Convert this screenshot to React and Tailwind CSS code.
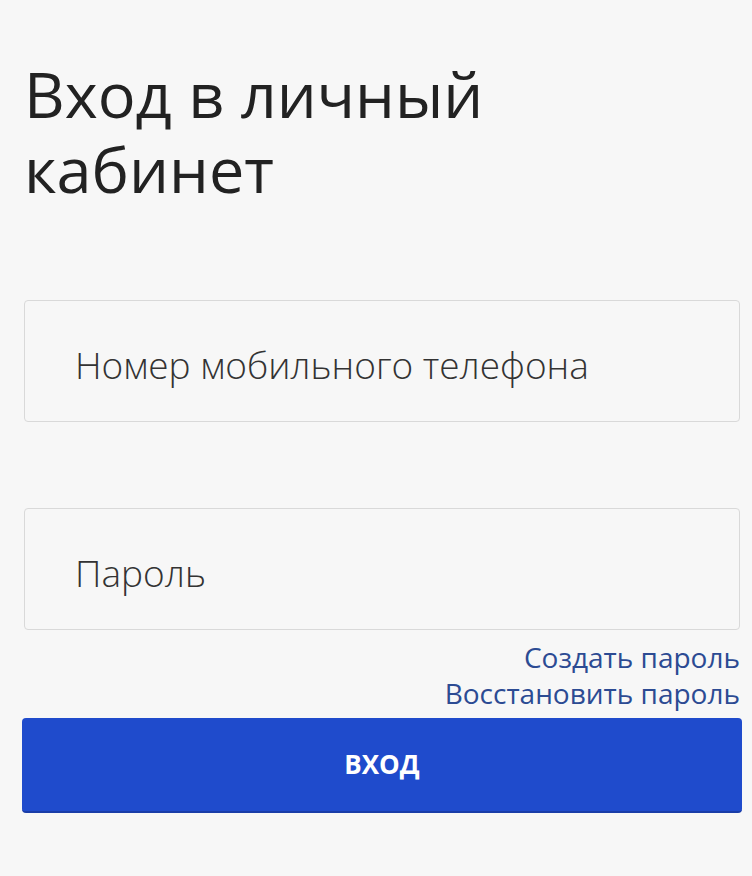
export default function App() {
  return (
    <div className="min-h-[876px] w-[752px] bg-[#f7f7f7] pl-[24px] pr-[12px] pt-[56px] font-['Open_Sans',sans-serif]">
      <h1 className="text-[63px] leading-[75px] text-[#222] font-normal">
        <span className="block">Вход в личный</span>
        <span className="block">кабинет</span>
      </h1>

      <div className="mt-[94px] flex h-[122px] items-center rounded-[4px] border border-[#d9d9d9] bg-[#f7f7f7] pl-[50px] pt-[8px] text-[37px] font-light text-[#333]">
        Номер мобильного телефона
      </div>

      <div className="mt-[86px] flex h-[122px] items-center rounded-[4px] border border-[#d9d9d9] bg-[#f7f7f7] pl-[50px] pt-[8px] text-[37px] font-light text-[#333]">
        Пароль
      </div>

      <div className="mt-[9px] flex flex-col items-end text-[28px] leading-[36px] text-[#2c4b93]">
        <a href="#">Создать пароль</a>
        <a href="#">Восстановить пароль</a>
      </div>

      <button
        type="button"
        className="mt-[7px] -ml-[2px] flex h-[95px] w-[720px] items-center justify-center rounded-[4px] border-b-2 border-[#1a3da8] bg-[#1f4bcc] text-[26px] font-bold text-white"
      >
        ВХОД
      </button>
    </div>
  )
}
